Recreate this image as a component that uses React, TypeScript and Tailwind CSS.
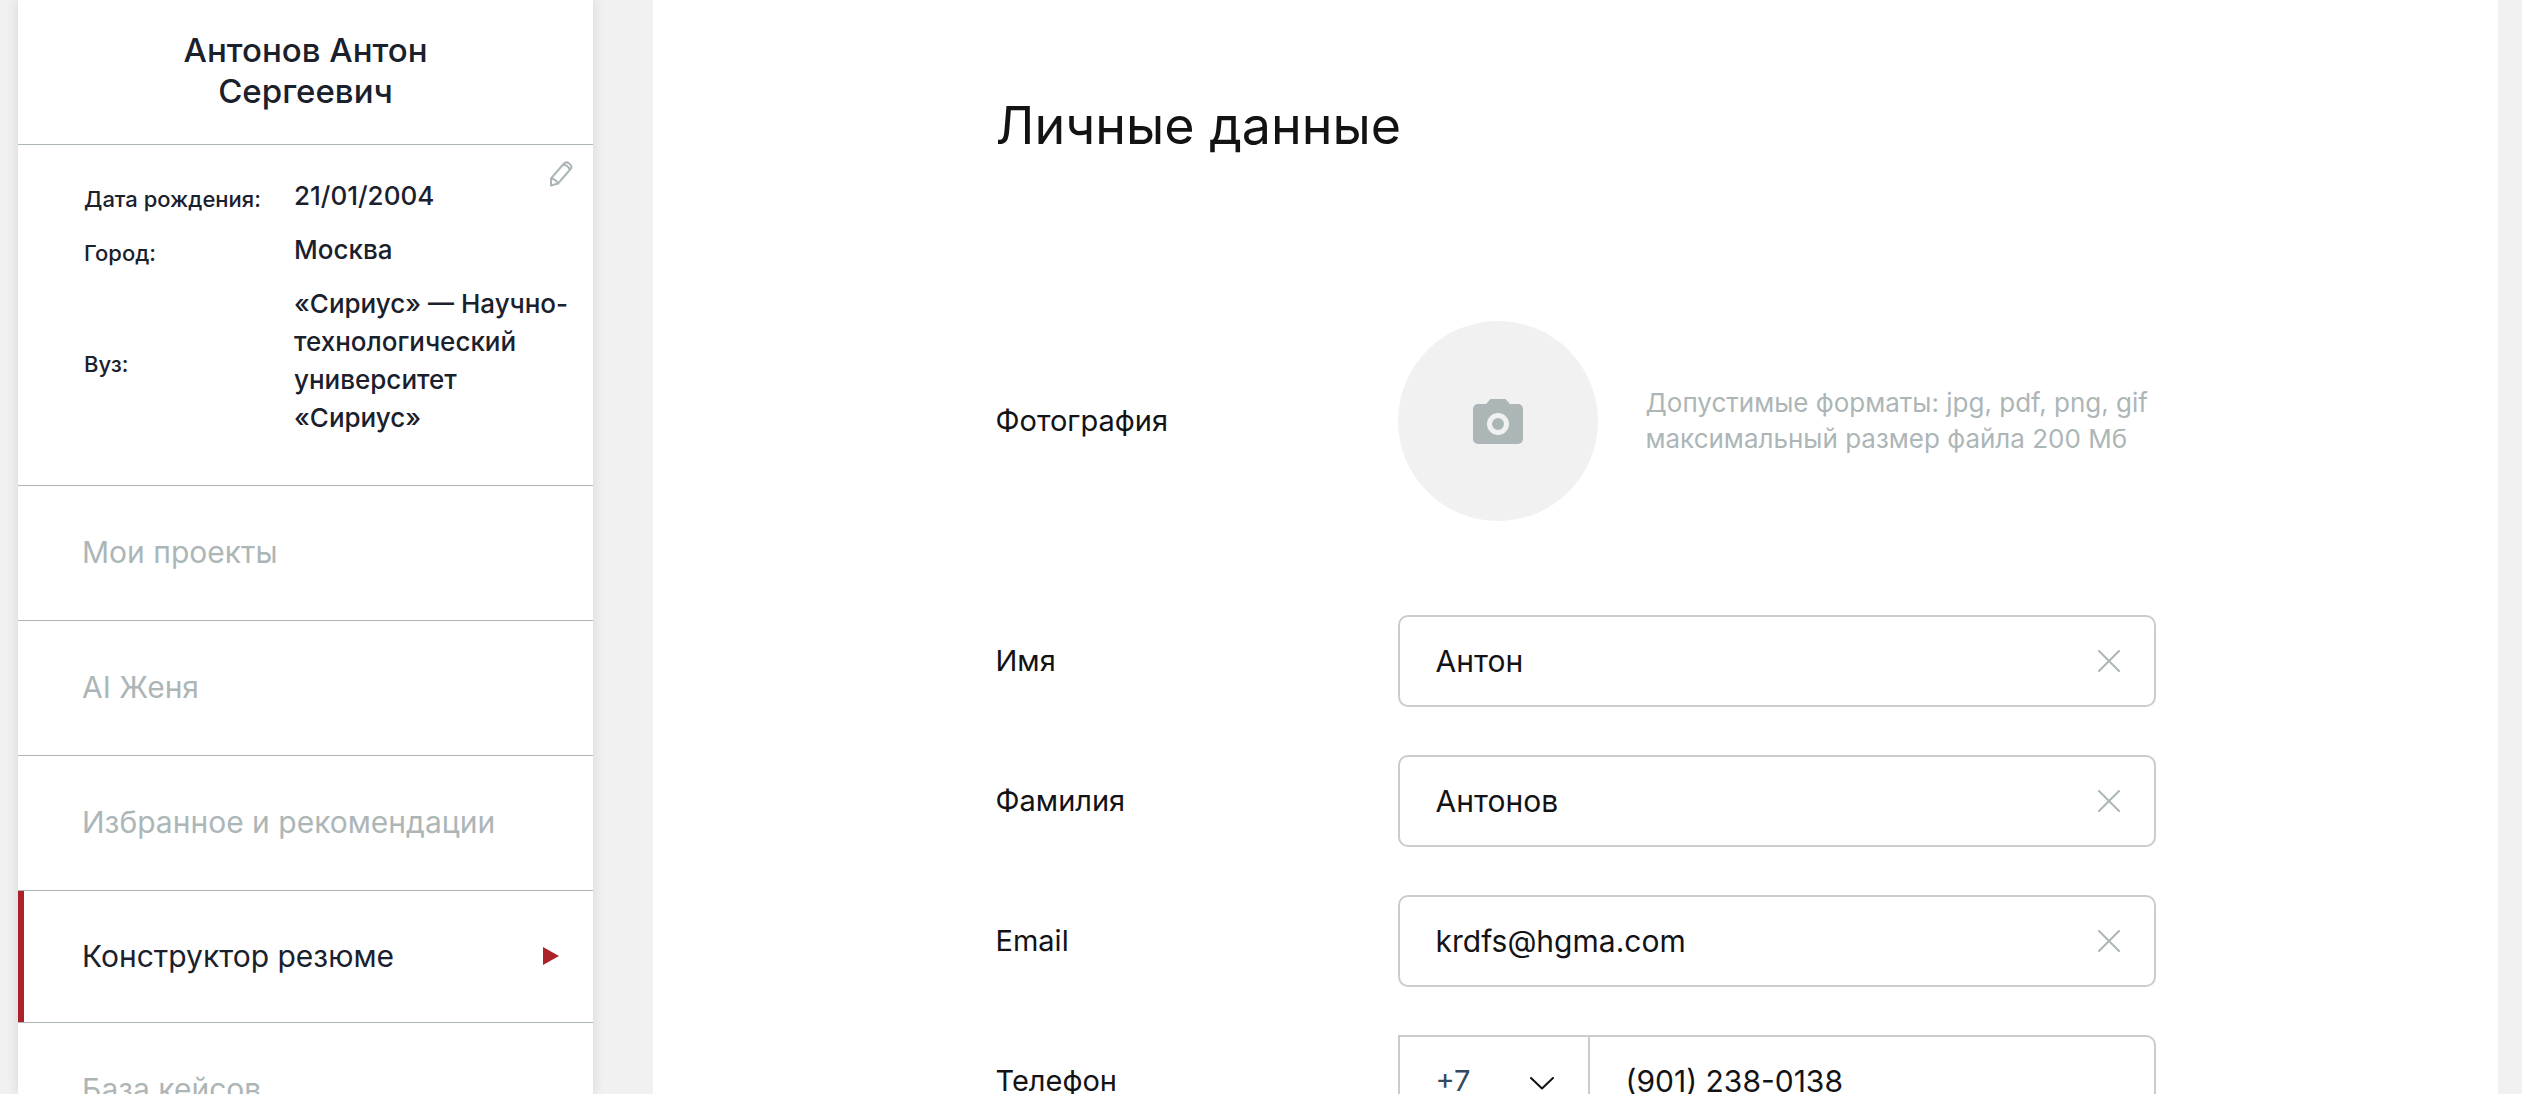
import { useState } from 'react'

const profile = [
  { label: 'Дата рождения:', value: '21/01/2004' },
  { label: 'Город:', value: 'Москва' },
  { label: 'Вуз:', value: '«Сириус» — Научно-технологический университет «Сириус»' },
]

const menu = ['Мои проекты', 'AI Женя', 'Избранное и рекомендации', 'Конструктор резюме', 'База кейсов']

const textFields = [
  { id: 'firstName', label: 'Имя', type: 'text' },
  { id: 'lastName', label: 'Фамилия', type: 'text' },
  { id: 'email', label: 'Email', type: 'email' },
]

function PencilIcon() {
  return (
    <svg width="24" height="26" viewBox="0 0 24 26" fill="none" stroke="#adb6b7" strokeWidth="2" strokeLinejoin="round">
      <path d="M2 24.5 2 17.500 14.5 3C16 1.3 18.300 1 20 2.300C22.600 4.300 23 6.300 21.600 8L9 22.500Z" />
      <path d="M2 17.500C5 18 7.500 19.500 9 22.500M14 4C17.500 4 20 6 20.800 9" />
    </svg>
  )
}

function CameraIcon() {
  return (
    <svg width="50" height="45" viewBox="0 0 50 45">
      <path
        d="M17.500 0H32.500L37 5H45A5 5 0 0 1 50 10V40A5 5 0 0 1 45 45H5A5 5 0 0 1 0 40V10A5 5 0 0 1 5 5H13Z"
        fill="#adb6b7"
      />
      <circle cx="25" cy="25" r="8.5" fill="none" stroke="#f1f1f1" strokeWidth="5" />
    </svg>
  )
}

function Sidebar() {
  const [active, setActive] = useState('Конструктор резюме')

  return (
    <aside className="w-[575px] shrink-0 bg-white text-[#1a202c] shadow-[0_0_12px_rgba(0,0,0,0.12)]">
      <h2 className="border-b border-[#adb6b7] px-20 pt-[30px] pb-8 text-center text-[33px] leading-[41px] font-medium">
        Антонов Антон Сергеевич
      </h2>

      {/* Profile summary */}
      <div className="relative border-b border-[#b3b3b3] pt-8 pr-5 pb-12 pl-[66px] font-medium">
        <dl className="grid grid-cols-[210px_1fr] items-center gap-y-4">
          {profile.map((row) => (
            <div key={row.label} className="contents">
              <dt className="pt-1.5 text-[22px] leading-8">{row.label}</dt>
              <dd className="text-[26px] leading-[38px]">{row.value}</dd>
            </div>
          ))}
        </dl>
        <button type="button" aria-label="Редактировать" className="absolute top-4 right-5 cursor-pointer">
          <PencilIcon />
        </button>
      </div>

      <nav>
        {menu.map((item) => {
          const isActive = item === active
          return (
            <a
              key={item}
              href="#"
              onClick={() => setActive(item)}
              className={`flex items-center justify-between border-b border-[#adb6b7] pr-[34px] pl-16 text-[30px] leading-9 ${
                isActive
                  ? 'pt-[47px] pb-12 text-[#1a202c] shadow-[inset_6px_0_0_#ab2328]'
                  : 'pt-12 pb-[50px] text-[#adb6b7]'
              }`}
            >
              {item}
              {isActive && (
                <svg width="16" height="18" viewBox="0 0 16 18" fill="#ab2328">
                  <path d="M0 0 16 9 0 18Z" />
                </svg>
              )}
            </a>
          )
        })}
      </nav>
    </aside>
  )
}

function PersonalForm() {
  const [values, setValues] = useState<Record<string, string>>({
    firstName: 'Антон',
    lastName: 'Антонов',
    email: 'krdfs@hgma.com',
    phone: '(901) 238-0138',
  })

  const update = (id: string, value: string) => setValues({ ...values, [id]: value })

  return (
    <form className="mx-auto max-w-[1160px] pt-[94px] pb-24 text-[#131316]">
      <h1 className="text-[52px] leading-16">Личные данные</h1>

      {/* Photo */}
      <div className="mt-[163px] flex items-center">
        <label htmlFor="photo" className="w-[402px] shrink-0 text-[29px] leading-9">
          Фотография
        </label>
        <button
          id="photo"
          type="button"
          className="flex size-[200px] shrink-0 cursor-pointer items-center justify-center rounded-full bg-[#f1f1f1]"
        >
          <CameraIcon />
        </button>
        <p className="ml-12 text-[26px] leading-9 whitespace-nowrap text-[#adb6b7]">
          Допустимые форматы: jpg, pdf, png, gif
          <br />
          максимальный размер файла 200 Мб
        </p>
      </div>

      <div className="mt-[94px] flex flex-col gap-12">
        {textFields.map((field) => (
          <div key={field.id} className="flex items-center">
            <label htmlFor={field.id} className="w-[402px] shrink-0 text-[29px] leading-9">
              {field.label}
            </label>
            <div className="flex h-[92px] min-w-0 flex-1 items-center rounded-[10px] border-2 border-[#cbcccd] pr-[34px] pl-9">
              <input
                id={field.id}
                type={field.type}
                value={values[field.id]}
                onChange={(e) => update(field.id, e.target.value)}
                className="min-w-0 flex-1 text-[30px] leading-9 outline-none"
              />
              <button type="button" aria-label="Очистить" onClick={() => update(field.id, '')} className="cursor-pointer">
                <svg width="22" height="22" viewBox="0 0 22 22" stroke="#adb6b7" strokeWidth="2" strokeLinecap="round">
                  <path d="M1 1 21 21M21 1 1 21" />
                </svg>
              </button>
            </div>
          </div>
        ))}

        {/* Phone */}
        <div className="flex items-center">
          <label htmlFor="phone" className="w-[402px] shrink-0 text-[29px] leading-9">
            Телефон
          </label>
          <div className="flex h-[92px] min-w-0 flex-1 rounded-r-[10px] border-2 border-[#cbcccd] text-[30px] leading-9">
            <div className="relative w-[190px] shrink-0 border-r-2 border-[#cbcccd]">
              <select
                aria-label="Код страны"
                className="size-full cursor-pointer appearance-none pl-9 text-[29px] text-[#34495e] outline-none"
              >
                <option>+7</option>
                <option>+375</option>
              </select>
              <svg
                className="pointer-events-none absolute top-10 right-[34px]"
                width="24"
                height="13"
                viewBox="0 0 24 13"
                fill="none"
                stroke="#131316"
                strokeWidth="2"
                strokeLinecap="round"
                strokeLinejoin="round"
              >
                <path d="M1 1 12 11.500 23 1" />
              </svg>
            </div>
            <input
              id="phone"
              type="tel"
              value={values.phone}
              onChange={(e) => update('phone', e.target.value)}
              className="min-w-0 flex-1 px-9 outline-none"
            />
          </div>
        </div>
      </div>
    </form>
  )
}

export default function App() {
  return (
    <div className="flex h-screen gap-[60px] overflow-hidden bg-[#f1f1f1] pr-6 pl-[18px] font-['Inter',sans-serif]">
      <Sidebar />
      <main className="min-w-0 flex-1 bg-white">
        <PersonalForm />
      </main>
    </div>
  )
}
